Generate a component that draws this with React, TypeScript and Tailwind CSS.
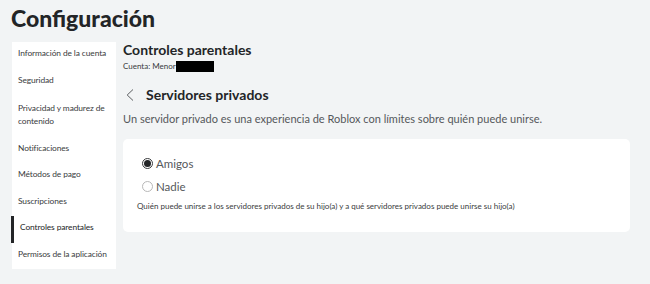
import { useState } from 'react';

const menu = [
  'Información de la cuenta',
  'Seguridad',
  'Privacidad y madurez de contenido',
  'Notificaciones',
  'Métodos de pago',
  'Suscripciones',
  'Controles parentales',
  'Permisos de la aplicación',
];

const font = { fontFamily: 'Lato, "Noto Sans", sans-serif' };

export default function App() {
  const [choice, setChoice] = useState('amigos');

  return (
    <div className="min-h-[284px] w-[650px] bg-[#f2f4f5] text-[#393b3d]" style={font}>
      <h1 className="px-[11px] pt-[1px] text-[23px] font-black leading-[34px] text-[#232527]">
        Configuración
      </h1>

      <div className="mt-[7px] flex items-start gap-[7px] pl-[12px] pr-[20px]">
        {/* Sidebar */}
        <nav className="w-[104px] bg-white">
          {menu.map((item, i) => {
            const active = item === 'Controles parentales';
            return (
              <div
                key={item}
                className={`pb-[8.5px] pl-[6px] text-[8.4px] leading-[13px] tracking-[-0.1px] ${
                  i === 2 ? 'pt-[7px]' : 'pt-[5px]'
                } ${
                  active ? 'border-l-[3px] border-[#232527] pl-[3px] -ml-[1px] text-[#232527]' : 'text-[#393b3d]'
                }`}
              >
                {item}
              </div>
            );
          })}
        </nav>

        {/* Main */}
        <main className="flex-1">
          <h2 className="mt-[1px] text-[14px] font-bold leading-[14px] text-[#232527]">Controles parentales</h2>
          <div className="mt-[4px] flex items-center text-[8px] leading-[11px] text-[#393b3d]">
            Cuenta: Menor
            <span className="inline-block h-[11px] w-[38px] bg-black" />
          </div>

          <div className="mt-[15px] flex items-center">
            <button className="ml-[3px] flex h-[14px] w-[8px] items-center justify-center">
              <svg width="8" height="12" viewBox="0 0 8 12" fill="none">
                <path d="M7 0.5 L1.2 6 L7 11.5" stroke="#5b5d60" strokeWidth="1" />
              </svg>
            </button>
            <h3 className="ml-[12px] text-[14px] font-bold leading-[16px] text-[#232527]">
              Servidores privados
            </h3>
          </div>

          <p className="mt-[8px] text-[11px] leading-[16px] text-[#55585b]">
            Un servidor privado es una experiencia de Roblox con límites sobre quién puede unirse.
          </p>

          <div className="mt-[12px] rounded-[5px] bg-white px-[14px] pt-[13px] pb-[20px]">
            {[
              { id: 'amigos', label: 'Amigos' },
              { id: 'nadie', label: 'Nadie' },
            ].map((opt) => (
              <label key={opt.id} className="ml-[5px] flex h-[23px] cursor-pointer items-center">
                <span
                  onClick={() => setChoice(opt.id)}
                  className={`flex h-[11px] w-[11px] items-center justify-center rounded-full border ${
                    choice === opt.id ? 'border-[#393b3d]' : 'border-[#b8b8b8]'
                  }`}
                >
                  {choice === opt.id && <span className="h-[7px] w-[7px] rounded-full bg-[#232527]" />}
                </span>
                <span className="ml-[3px] text-[11.5px] text-[#55585b]">{opt.label}</span>
              </label>
            ))}
            <p className="mt-[3px] text-[8px] leading-[11px] text-[#393b3d]">
              Quién puede unirse a los servidores privados de su hijo(a) y a qué servidores privados puede unirse su hijo(a)
            </p>
          </div>
        </main>
      </div>
    </div>
  );
}
